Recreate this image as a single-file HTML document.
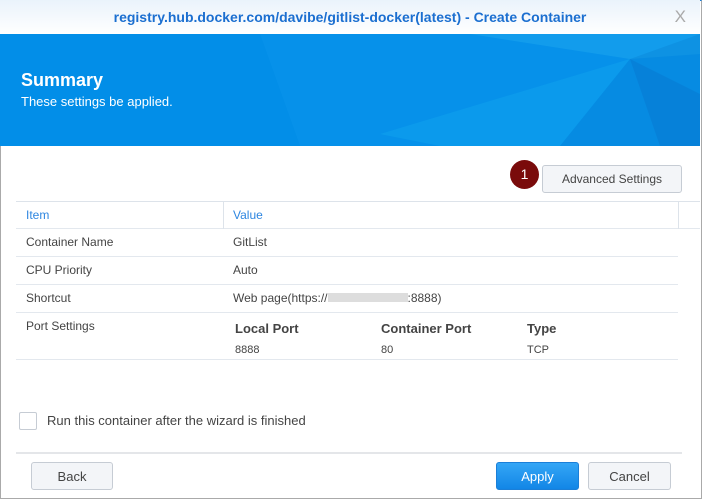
<!DOCTYPE html>
<html><head><style>
*{box-sizing:border-box;margin:0;padding:0}
body{width:702px;height:499px;overflow:hidden;background:#fff;font-family:"Liberation Sans",sans-serif;font-size:12px;color:#444;position:relative}
.win{position:absolute;left:0;top:0;width:702px;height:499px;border:1px solid #aaa;border-top:1px solid #1a7fd8;background:#fff}
.title{position:absolute;left:0;top:0;width:700px;height:34px;background:linear-gradient(#eaf3fb,#fff);text-align:center;line-height:34px;color:#1b6fd0;font-size:14px;font-weight:bold}
.x{position:absolute;right:14px;top:0;color:#aaa;font-size:17px;font-weight:normal}
.hdr{position:absolute;left:0;top:34px;width:700px;height:112px;background:#028ee8;overflow:hidden}
.hdr h1{position:absolute;left:21px;top:36px;color:#fff;font-size:18px;font-weight:bold}
.hdr p{position:absolute;left:21px;top:60px;color:#fff;font-size:13px}
.adv{position:absolute;left:542px;top:165px;width:140px;height:28px;border:1px solid #c6ccd4;border-radius:3px;background:#f3f5f8;text-align:center;line-height:27px;color:#444}
.badge{position:absolute;left:510px;top:160px;width:29px;height:29px;border-radius:50%;background:#7a0b0b;color:#fff;text-align:center;line-height:29px;font-size:14px}
.row{position:absolute;left:16px;width:662px;border-bottom:1px solid #e3e8ee}
.row span{position:absolute;top:0}
.c1{left:10px}.c2{left:217px}
.th{color:#2e86e0}
.btn{position:absolute;top:462px;height:28px;border:1px solid #c6ccd4;border-radius:3px;background:#f3f5f8;text-align:center;line-height:27px;font-size:13px;color:#444}
</style></head><body>
<div class="win"></div>
<div class="title">registry.hub.docker.com/davibe/gitlist-docker(latest) - Create Container<span class="x">X</span></div>
<div class="hdr">
<svg width="700" height="112" style="position:absolute;left:0;top:0">
<polygon points="260,0 700,0 700,112 300,112" fill="#0a94ec" opacity=".5"/>
<polygon points="470,0 700,0 700,20 630,25" fill="#22aaf0" opacity=".45"/>
<polygon points="630,25 700,0 700,112 560,112" fill="#0a80d4" opacity=".35"/>
<polygon points="380,100 630,25 560,112 440,112" fill="#18b0f2" opacity=".3"/>
<polygon points="630,25 700,60 700,112 660,112" fill="#0870c8" opacity=".35"/>
</svg>
<h1>Summary</h1><p>These settings be applied.</p></div>
<div class="badge">1</div>
<div class="adv">Advanced Settings</div>
<div class="row" style="top:201px;height:28px;border-top:1px solid #dde3ea;width:684px"><span class="c1 th" style="top:6px">Item</span><span class="c2 th" style="top:6px">Value</span><div style="position:absolute;left:207px;top:0;height:27px;border-left:1px solid #dde3ea"></div><div style="position:absolute;left:662px;top:0;height:27px;border-left:1px solid #dde3ea"></div></div>
<div class="row" style="top:229px;height:28px"><span class="c1" style="top:6px">Container Name</span><span class="c2" style="top:6px">GitList</span></div>
<div class="row" style="top:257px;height:28px"><span class="c1" style="top:6px">CPU Priority</span><span class="c2" style="top:6px">Auto</span></div>
<div class="row" style="top:285px;height:28px"><span class="c1" style="top:6px">Shortcut</span><span class="c2" style="top:6px">Web page(https://<span style="display:inline-block;width:80px;height:9px;background:#ddd;position:static"></span>:8888)</span></div>
<div class="row" style="top:313px;height:47px"><span class="c1" style="top:6px">Port Settings</span>
<span style="left:219px;top:8px;font-weight:bold;font-size:13px">Local Port</span><span style="left:365px;top:8px;font-weight:bold;font-size:13px">Container Port</span><span style="left:511px;top:8px;font-weight:bold;font-size:13px">Type</span>
<span style="left:219px;top:31px;font-size:11px">8888</span><span style="left:365px;top:31px;font-size:11px">80</span><span style="left:511px;top:31px;font-size:11px">TCP</span></div>
<div style="position:absolute;left:19px;top:412px;width:18px;height:18px;border:1px solid #c6ccd4;border-radius:2px"></div>
<div style="position:absolute;left:47px;top:413px;font-size:13px">Run this container after the wizard is finished</div>
<div style="position:absolute;left:16px;top:452px;width:666px;border-top:2px solid #e4e6e9"></div>
<div class="btn" style="left:31px;width:82px">Back</div>
<div class="btn" style="left:496px;width:83px;background:linear-gradient(#34a6f6,#1286e6);border-color:#1b7fd8;color:#fff">Apply</div>
<div class="btn" style="left:588px;width:83px">Cancel</div>
</body></html>
